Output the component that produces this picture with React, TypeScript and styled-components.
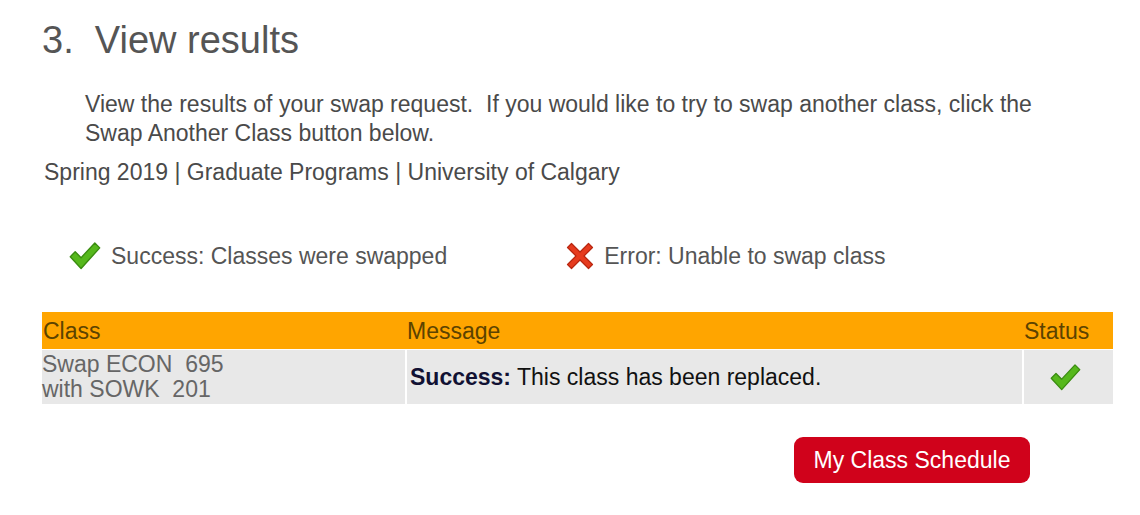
import styled, { createGlobalStyle } from 'styled-components';

const GlobalStyle = createGlobalStyle`
    body {
        margin: 0;
        background: #ffffff;
        font-family: "Liberation Sans", Arial, sans-serif;
    }
`

const CheckIcon = ({ size = 32 }: { size?: number }) => (
    <svg width={size} height={size * 0.92} viewBox="0 0 32 30">
        <path d="M1 16 L6 11 L12 17 L26 2 L31 7 L12 28 Z" fill="#56b81c" stroke="#3a8c10" strokeWidth="1.4" strokeLinejoin="round" />
    </svg>
)

const CrossIcon = () => (
    <svg width="28" height="28" viewBox="0 0 28 28">
        <path d="M1.5 5.5 L5.5 1.5 L14 10 L22.5 1.5 L26.5 5.5 L18 14 L26.5 22.5 L22.5 26.5 L14 18 L5.5 26.5 L1.5 22.5 L10 14 Z" fill="#e63b1e" stroke="#b9260f" strokeWidth="1.2" strokeLinejoin="round" />
    </svg>
)

const rows = [
    { cls: ['Swap ECON  695', 'with SOWK  201'], message: 'This class has been replaced.' },
]

const App = () => {
    return (
        <Page>
            <GlobalStyle />
            <Title>3.&nbsp;&nbsp;View results</Title>
            <Intro>
                View the results of your swap request.&nbsp; If you would like to try to swap another class, click the<br />
                Swap Another Class button below.
            </Intro>
            <Term>Spring 2019 | Graduate Programs | University of Calgary</Term>
            <Legend>
                <LegendItem>
                    <CheckIcon />
                    <span>Success: Classes were swapped</span>
                </LegendItem>
                <LegendItem>
                    <CrossIcon />
                    <span>Error: Unable to swap class</span>
                </LegendItem>
            </Legend>
            <Table>
                <thead>
                    <tr>
                        <Th>Class</Th>
                        <Th>Message</Th>
                        <Th>Status</Th>
                    </tr>
                </thead>
                <tbody>
                    {rows.map((row, i) => (
                        <tr key={i}>
                            <ClassCell>{row.cls[0]}<br />{row.cls[1]}</ClassCell>
                            <MessageCell><b>Success:</b> {row.message}</MessageCell>
                            <StatusCell><CheckIcon size={31} /></StatusCell>
                        </tr>
                    ))}
                </tbody>
            </Table>
            <Actions>
                <Button>My Class Schedule</Button>
            </Actions>
        </Page>
    );
}

const Page = styled.div`
    width: 1140px;
    height: 515px;
    padding: 20px 27px 0 42px;
    box-sizing: border-box;
    color: #555555;
`

const Title = styled.h1`
    margin: 0;
    font-size: 38px;
    font-weight: normal;
    color: #555555;
    line-height: 40px;
`

const Intro = styled.p`
    margin: 30px 0 0 43px;
    font-size: 23px;
    line-height: 29px;
    color: #4a4a4a;
    white-space: nowrap;
`

const Term = styled.div`
    margin: 11px 0 0 2px;
    font-size: 23px;
    line-height: 26px;
    color: #4a4a4a;
`

const Legend = styled.div`
    display: flex;
    gap: 119px;
    margin: 57px 0 0 27px;
    font-size: 23px;
    color: #555555;
`

const LegendItem = styled.div`
    display: flex;
    align-items: center;
    gap: 10px;
    height: 28px;
`

const Table = styled.table`
    margin-top: 42px;
    width: 1071px;
    border-collapse: collapse;
`

const Th = styled.th`
    background: #ffa500;
    color: #5c4300;
    font-weight: normal;
    font-size: 23px;
    text-align: left;
    padding: 0 0 0 1px;
    height: 37px;
    line-height: 24px;
    vertical-align: middle;
`

const Td = styled.td`
    background: #e8e8e8;
    border-top: 1px solid #ffffff;
    border-left: 2px solid #ffffff;
    height: 54px;
    padding: 0;
    vertical-align: middle;
    &:first-child {
        border-left: none;
    }
`

const ClassCell = styled(Td)`
    width: 363px;
    font-size: 23px;
    line-height: 25px;
    color: #666666;
    white-space: pre;
`

const MessageCell = styled(Td)`
    font-size: 23px;
    color: #111111;
    padding-left: 3px;
    b {
        color: #111133;
    }
`

const StatusCell = styled(Td)`
    width: 89px;
    text-align: center;
    svg {
        display: inline-block;
        vertical-align: middle;
        margin: 0 6px 0 0;
    }
`

const Actions = styled.div`
    display: flex;
    justify-content: flex-end;
    width: 988px;
    margin-top: 33px;
`

const Button = styled.button`
    background: #d0021b;
    color: #ffffff;
    border: none;
    border-radius: 9px;
    width: 236px;
    height: 46px;
    font-family: "Liberation Sans", Arial, sans-serif;
    font-size: 23px;
    cursor: pointer;
`

export default App;
